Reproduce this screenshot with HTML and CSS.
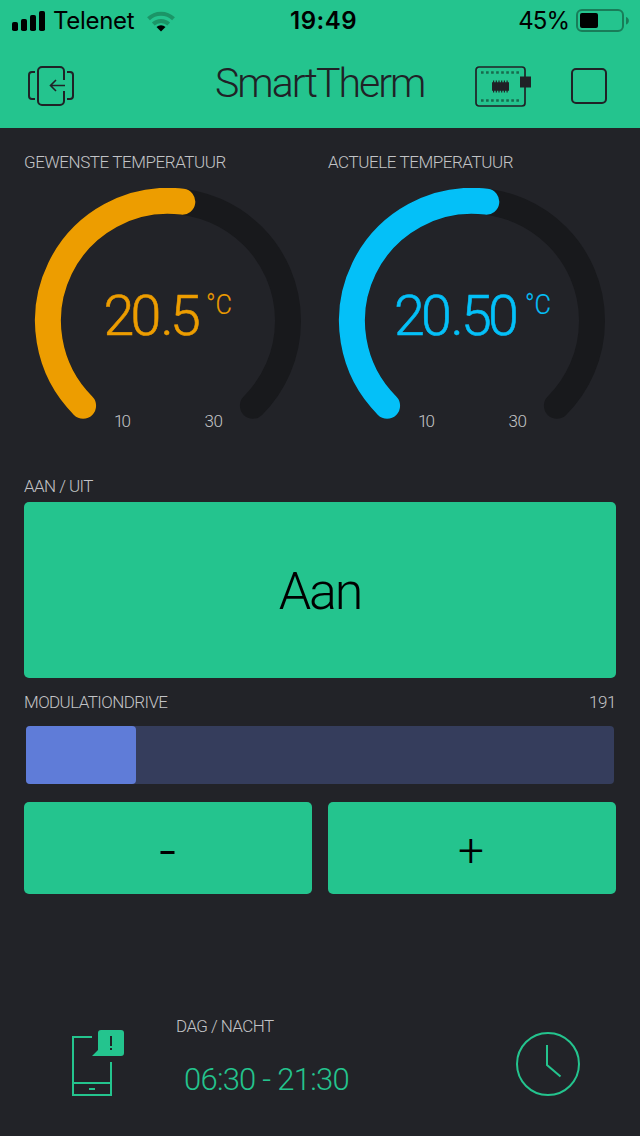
FILE: index.html
```
<!DOCTYPE html>
<html lang="nl">
<head>
<meta charset="utf-8">
<title>SmartTherm</title>
<link rel="stylesheet" href="styles.css">
</head>
<body>
<header class="header">
  <div class="status">
    <div class="carrier">
      <svg width="34" height="20" viewBox="0 0 34 20"><rect x="0" y="11" width="6" height="9" rx="1.8"/><rect x="9" y="8" width="6" height="12" rx="1.8"/><rect x="18" y="4" width="6" height="16" rx="1.8"/><rect x="27" y="0" width="6" height="20" rx="1.8"/></svg>
      <span class="carrier-name">Telenet</span>
      <svg class="wifi" width="28" height="21" viewBox="0 0 28 21"><g fill="none" stroke="#1b9567" stroke-width="4"><path d="M1.5 7.7a18 18 0 0 1 25 0"/><path d="M6.3 13a11.2 11.2 0 0 1 15.4 0"/></g><path d="M9.5 16a6.5 6.5 0 0 1 9 0L14 20.5z"/></svg>
    </div>
    <time class="clock">19:49</time>
    <div class="battery"><span class="percent">45%</span>
      <svg width="54" height="24" viewBox="0 0 54 24"><rect x="1" y="1" width="46" height="21" rx="5" fill="none" stroke="#197d59" stroke-width="2"/><rect x="4" y="4" width="18" height="15" rx="2"/><path d="M50 8c3.800 1 3.800 6.500 0 7.500z" fill="#197d59"/></svg>
    </div>
  </div>
  <nav class="toolbar">
    <svg width="48" height="42" viewBox="0 0 48 42" fill="none" stroke="#202126" stroke-width="2"><path d="M36 14V5a4 4 0 0 0-4-4H14a4 4 0 0 0-4 4v30a4 4 0 0 0 4 4h18a4 4 0 0 0 4-4V25"/><path d="M7 6H4a3 3 0 0 0-3 3v21a3 3 0 0 0 3 3h3M39 6h3a3 3 0 0 1 3 3v21a3 3 0 0 1-3 3h-3"/><path d="M37 19.500H23M28 14l-5.500 5.500L28 25" stroke-width="1.600"/></svg>
    <h1 class="title">SmartTherm</h1>
    <svg class="board" width="58" height="42" viewBox="0 0 58 42"><rect x="1" y="1" width="49" height="39" rx="3" fill="none" stroke="#202126" stroke-width="1.700"/><path d="M6 6.500h40M6 34.500h40" stroke="#176a4d" stroke-width="2.600" stroke-dasharray="2.600 2.450"/><path d="M17 20.500h17" stroke="#202126" stroke-width="8.500"/><path d="M18 20.500h15.500" stroke="#202126" stroke-width="12" stroke-dasharray="1.200 1.500"/><rect x="45" y="10.500" width="11" height="11" fill="#202126"/></svg>
    <svg class="stop" width="36" height="36"><rect x="1" y="1" width="34" height="34" rx="4" fill="none" stroke="#202126" stroke-width="2"/></svg>
  </nav>
</header>
<main class="board-grid">
  <section class="gauge">
    <h2 class="label">GEWENSTE TEMPERATUUR</h2>
    <svg class="dial orange" width="288" height="248" viewBox="24 188 288 248">
      <path class="track" d="M83.100 405.700A120 120 0 1 1 252.900 405.700"/><path class="arc" d="M83.100 405.700A120 120 0 0 1 182.300 201.700"/>
      <text class="value" x="103.500 130.500 160.500 170" y="335">20.5</text><text class="unit" x="206" y="314" textLength="26" lengthAdjust="spacingAndGlyphs">°C</text>
      <text class="limit" x="114" y="427" textLength="17">10</text><text class="limit" x="204.500" y="427" textLength="18.500">30</text>
    </svg>
  </section>
  <section class="gauge">
    <h2 class="label actual">ACTUELE TEMPERATUUR</h2>
    <svg class="dial blue" width="288" height="248" viewBox="24 188 288 248">
      <path class="track" d="M83.100 405.700A120 120 0 1 1 252.900 405.700"/><path class="arc" d="M83.100 405.700A120 120 0 0 1 182.300 201.700"/>
      <text class="value" x="90 117 146.500 157 184" y="335">20.50</text><text class="unit" x="221" y="314" textLength="26" lengthAdjust="spacingAndGlyphs">°C</text>
      <text class="limit" x="114" y="427" textLength="17">10</text><text class="limit" x="204.500" y="427" textLength="18.500">30</text>
    </svg>
  </section>
  <section class="wide power">
    <h2 class="label short">AAN / UIT</h2>
    <button class="button on"><span>Aan</span></button>
  </section>
  <section class="wide modulation">
    <div class="row"><h2 class="label short">MODULATIONDRIVE</h2><span class="label">191</span></div>
    <div class="meter"><div class="fill"></div></div>
  </section>
  <button class="button step minus"><span>-</span></button>
  <button class="button step"><span>+</span></button>
</main>
<footer class="footer">
  <svg class="notify" width="54" height="68" viewBox="0 0 54 68"><path d="M20 7H1v58h38V32M1 53h38M17 59h6" fill="none" stroke="#24c48e" stroke-width="2"/><path d="M26 3a3 3 0 0 1 3-3h20a3 3 0 0 1 3 3v20a3 3 0 0 1-3 3H20l6-6z" fill="#24c48e"/><path d="M39 6v10M39 18v2" stroke="#202126" stroke-width="2"/></svg>
  <div class="schedule"><h2 class="label short">DAG / NACHT</h2><p class="times">06:30 - 21:30</p></div>
  <svg class="timer" width="64" height="64" fill="none" stroke="#24c48e" stroke-width="2"><circle cx="32" cy="32" r="31"/><path d="M31 13v20l13.500 11.500"/></svg>
</footer>
</body>
</html>
```
FILE: styles.css
```
* { box-sizing: border-box; }
body { margin: 0; width: 640px; height: 1136px; overflow: hidden; background: #222328; font-family: Roboto, "Liberation Sans", sans-serif; font-weight: 300; }
svg { display: block; flex: none; }
h1, h2, p { margin: 0; font-weight: 300; }
.header { height: 128px; background: #24c48e; }
.status { height: 40px; padding: 1px 10px 0 12px; display: grid; grid-template-columns: 1fr auto 1fr; align-items: center; font: 400 24px/40px Inter, sans-serif; color: #000; }
.carrier { display: flex; align-items: center; }
.carrier-name { margin-left: 7px; letter-spacing: -0.3px; }
.wifi { margin-left: 13px; }
.clock { font-weight: 600; letter-spacing: 0.5px; padding-left: 5px; }
.battery { display: flex; align-items: center; justify-content: flex-end; gap: 7px; }
.percent { letter-spacing: -1px; }
.toolbar { height: 88px; padding: 0 33px 0 28px; display: flex; align-items: flex-start; }
.toolbar > svg { margin-top: 26px; }
.title { margin: 18px 0 0 139px; width: 211px; font-size: 41px; line-height: 50px; letter-spacing: -1.95px; color: #202126; white-space: nowrap; }
.toolbar > .board { margin-left: 49px; }
.toolbar > .stop { margin: 28px 0 0 38px; }
.board-grid { padding: 24px 24px 0; display: grid; grid-template-columns: 288px 288px; column-gap: 16px; }
.label { font-size: 17px; line-height: 20px; color: #c2c3c6; font-weight: 300; letter-spacing: -0.42px; white-space: nowrap; }
.short { letter-spacing: -0.58px; }
.dial { margin-top: 16px; }
.track, .arc { fill: none; stroke-width: 26; stroke-linecap: round; }
.track { stroke: #18191c; }
.orange .arc { stroke: #ed9d00; }
.blue .arc { stroke: #04c0f8; }
.orange .value, .orange .unit { fill: #ed9d00; stroke: #ed9d00; }
.blue .value, .blue .unit { fill: #04c0f8; stroke: #04c0f8; }
.value { font-size: 55.5px; stroke-width: 0.6; }
.unit { font-size: 28px; stroke-width: 0.2; }
.limit { font-size: 17px; fill: #c2c3c6; }
.wide { grid-column: 1 / -1; }
.power { margin-top: 40px; }
.button { display: flex; align-items: center; justify-content: center; width: 100%; padding: 0; border: 0; border-radius: 5px; background: #24c48e; color: #000; font-family: inherit; font-weight: 300; }
.on { height: 176px; margin-top: 6px; padding-top: 2px; font-size: 52px; letter-spacing: -2.2px; }
.modulation { margin-top: 14px; }
.row { display: flex; justify-content: space-between; }
.meter { height: 58px; margin: 14px 2px 18px; background: #353d5c; border-radius: 4px; }
.fill { width: 110px; height: 58px; background: #5f7cd8; border-radius: 4px; }
.step { height: 92px; padding: 4px 2px 0 0; font-size: 46px; }
.minus { padding: 4px 1px 0 0; font-size: 60px; }
.footer { margin-top: 122px; padding: 0 60px 0 72px; display: flex; }
.notify { margin-top: 14px; }
.schedule { margin-left: 50px; width: 340px; }
.times { margin: 24px 0 0 8px; font-size: 31px; line-height: 40px; letter-spacing: -0.75px; color: #24c48e; white-space: nowrap; }
.timer { margin-top: 16px; }
```
